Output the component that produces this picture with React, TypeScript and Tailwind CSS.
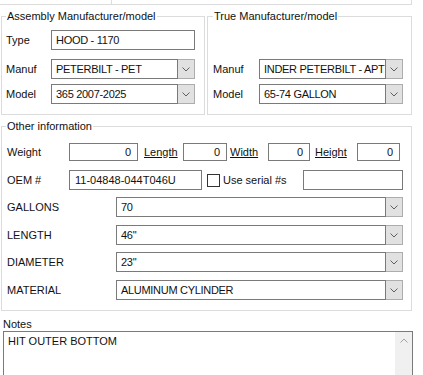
import React from 'react';

const Chevron: React.FC<{ up?: boolean; color?: string }> = ({ up, color = '#606060' }) => (
  <svg width="8" height="5" viewBox="0 0 8 5" fill="none">
    <polyline
      points={up ? '0.5,4.5 4,1 7.5,4.5' : '0.5,0.5 4,4 7.5,0.5'}
      stroke={color}
      strokeWidth="1"
    />
  </svg>
);

// editable combo box: text part + drop button
const Combo: React.FC<{ value: string; className: string }> = ({ value, className }) => (
  <div className={`flex h-[20px] ${className}`}>
    <div className="flex-1 border border-[#7a7a7a] bg-white pl-[4px] leading-[18px] tracking-[-0.3px] whitespace-nowrap overflow-hidden">
      {value}
    </div>
    <div className="w-[17px] flex items-center justify-center border-y border-r border-[#adadad] bg-[#e1e1e1]">
      <Chevron />
    </div>
  </div>
);

const TextBox: React.FC<{ value?: string; className: string; right?: boolean }> = ({ value = '', className, right }) => (
  <div
    className={`border border-[#7a7a7a] bg-white whitespace-nowrap overflow-hidden ${
      right ? 'text-right pr-[6px]' : 'pl-[4px]'
    } ${className}`}
  >
    {value}
  </div>
);

const Legend: React.FC<{ children: React.ReactNode }> = ({ children }) => (
  <legend className="px-[1px] leading-[13px]">{children}</legend>
);

export default function App() {
  const dropRows = [
    { label: 'GALLONS', value: '70', mt: 'mt-[7px]' },
    { label: 'LENGTH', value: '46"', mt: 'mt-[8px]' },
    { label: 'DIAMETER', value: '23"', mt: 'mt-[7px]' },
    { label: 'MATERIAL', value: 'ALUMINUM CYLINDER', mt: 'mt-[8px]' },
  ];

  return (
    <div
      className="w-[423px] h-[375px] overflow-hidden bg-white text-[11px] text-[#111]"
      style={{ fontFamily: '"Liberation Sans", Arial, sans-serif' }}
    >
      {/* bottom edge of the panels above */}
      <div className="flex h-[5px]">
        <div className="w-[112px] border-b border-r border-[#dcdcdc]" />
        <div className="w-[300px] border-b border-r border-[#dcdcdc]" />
      </div>

      {/* manufacturer boxes */}
      <div className="flex gap-[2px] ml-[1px] mt-[5px]">
        <fieldset className="w-[204px] border border-[#dcdcdc] pl-[4px] pb-[10px]">
          <Legend>Assembly Manufacturer/model</Legend>
          <div className="flex items-center mt-[7px]">
            <span className="w-[45px]">Type</span>
            <TextBox value="HOOD - 1170" className="w-[144px] h-[20px] leading-[18px] tracking-[-0.3px]" />
          </div>
          <div className="flex items-center mt-[9px]">
            <span className="w-[45px]">Manuf</span>
            <Combo value="PETERBILT - PET" className="w-[144px]" />
          </div>
          <div className="flex items-center mt-[5px]">
            <span className="w-[45px]">Model</span>
            <Combo value="365 2007-2025" className="w-[144px]" />
          </div>
        </fieldset>

        <fieldset className="w-[205px] border border-[#dcdcdc] pl-[5px] pb-[10px]">
          <Legend>True Manufacturer/model</Legend>
          <div className="flex items-center mt-[36px]">
            <span className="w-[46px]">Manuf</span>
            <Combo value="INDER PETERBILT - APT" className="w-[144px]" />
          </div>
          <div className="flex items-center mt-[5px]">
            <span className="w-[46px]">Model</span>
            <Combo value="65-74 GALLON" className="w-[144px]" />
          </div>
        </fieldset>
      </div>

      {/* other information */}
      <fieldset className="ml-[1px] mt-[5px] w-[411px] border border-[#dcdcdc] pl-[4px] pb-[10px]">
        <Legend>Other information</Legend>
        <div className="flex items-center mt-[10px] h-[18px]">
          <span className="w-[63px] pl-[1px]">Weight</span>
          <TextBox value="0" right className="w-[69px] h-[18px] leading-[16px]" />
          <span className="underline ml-[6px] w-[39px]">Length</span>
          <TextBox value="0" right className="w-[44px] h-[18px] leading-[16px]" />
          <span className="underline ml-[3px] w-[38px]">Width</span>
          <TextBox value="0" right className="w-[42px] h-[18px] leading-[16px]" />
          <span className="underline ml-[5px] w-[42px]">Height</span>
          <TextBox value="0" right className="w-[43px] h-[18px] leading-[16px]" />
        </div>
        <div className="flex items-center mt-[9px] h-[20px]">
          <span className="w-[63px] pl-[1px]">OEM #</span>
          <TextBox value="11-04848-044T046U" className="w-[133px] h-[20px] leading-[18px] !pl-[5px]" />
          <div className="ml-[5px] w-[13px] h-[13px] border border-[#333] bg-white" />
          <span className="ml-[3px] w-[80px]">Use serial #s</span>
          <TextBox className="w-[100px] h-[20px]" />
        </div>
        {dropRows.map((r) => (
          <div key={r.label} className={`flex items-center ${r.mt}`}>
            <span className="w-[110px] pl-[1px]">{r.label}</span>
            <Combo value={r.value} className="w-[287px]" />
          </div>
        ))}
      </fieldset>

      {/* notes */}
      <div className="ml-[3px] mt-[7px] leading-[13px]">Notes</div>
      <div className="ml-[3px] w-[410px] h-[60px] flex border border-[#7a7a7a] bg-white">
        <div className="flex-1 pl-[4px] pt-[3px] leading-[13px]">HIT OUTER BOTTOM</div>
        <div className="w-[17px] bg-[#f0f0f0] flex justify-center pt-[6px]">
          <Chevron up color="#a3a3a3" />
        </div>
      </div>
    </div>
  );
}
